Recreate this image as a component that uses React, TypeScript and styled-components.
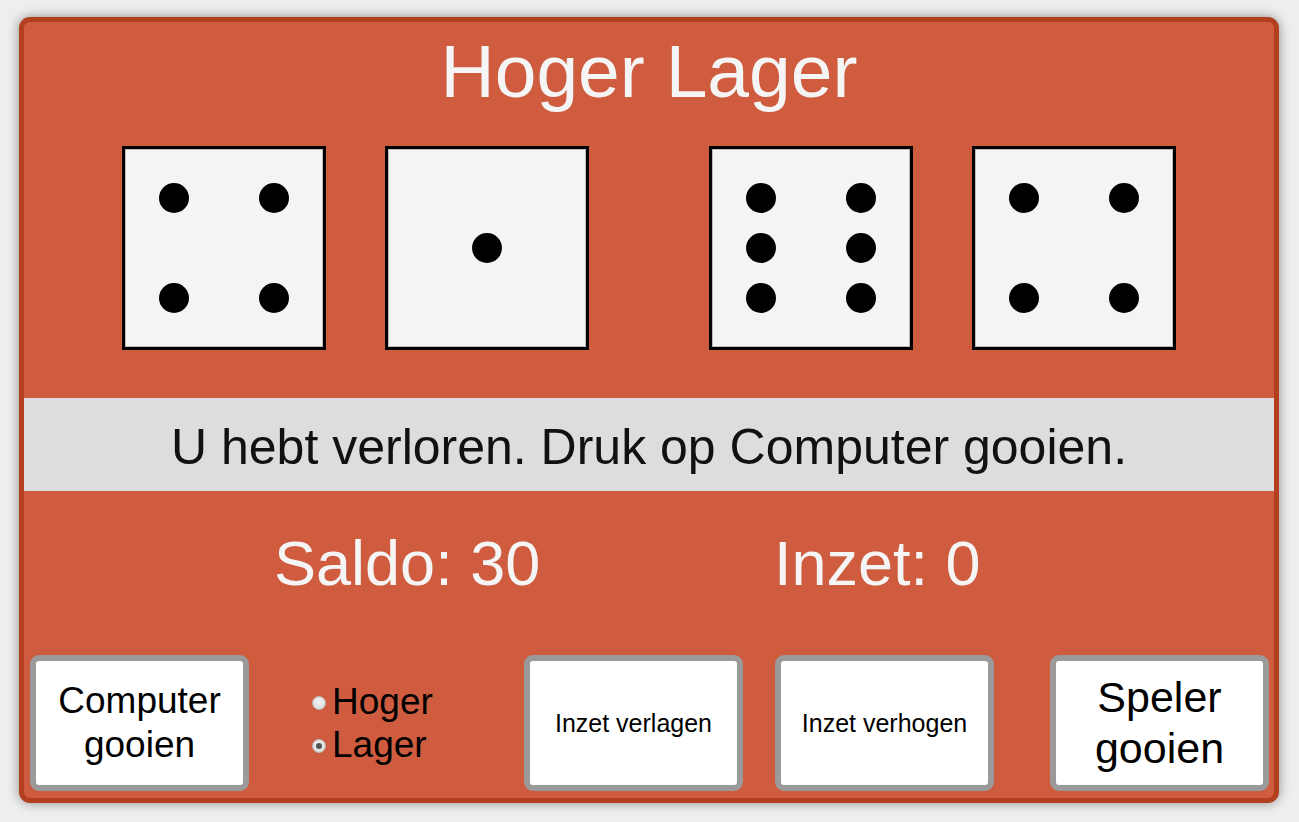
import React from "react";
import styled, { createGlobalStyle } from "styled-components";

const GlobalStyle = createGlobalStyle`
  html, body {
    margin: 0;
    padding: 0;
    background: #eeeeee;
    font-family: "Liberation Sans", Arial, sans-serif;
  }
  * { box-sizing: border-box; }
`;

const Page = styled.div`
  padding: 17px 0 0 19px;
  width: 1299px;
  height: 822px;
`;

const Card = styled.main`
  width: 1260px;
  background: #cf5c3f;
  border: 5px solid #b2401f;
  border-radius: 11px;
  box-shadow: 0 0 12px rgba(0, 0, 0, 0.4);
  padding-bottom: 7px;
  display: flex;
  flex-direction: column;
`;

const Title = styled.h1`
  margin: 7px 0 0;
  font-size: 75px;
  font-weight: normal;
  line-height: 84px;
  text-align: center;
  color: #f5f5f5;
`;

const DiceRow = styled.div`
  display: flex;
  justify-content: center;
  gap: 120px;
  margin-top: 33px;
`;

const DicePair = styled.div`
  display: flex;
  gap: 59px;
`;

const DieFace = styled.div`
  width: 204px;
  height: 204px;
  border: 3px solid #000;
  background: #f4f4f4;
  box-shadow: inset 0 0 0 1px #bdbdbd;
  display: grid;
  grid-template-columns: repeat(3, 50px);
  grid-template-rows: repeat(3, 50px);
  justify-content: center;
  align-content: center;
`;

const PipCell = styled.div<{ $on: boolean }>`
  display: flex;
  align-items: center;
  justify-content: center;
  &::after {
    content: "";
    width: 30px;
    height: 30px;
    border-radius: 50%;
    background: ${(p) => (p.$on ? "#000" : "transparent")};
  }
`;

const Message = styled.div`
  margin-top: 48px;
  height: 93px;
  padding-top: 21px;
  background: #dddddd;
  color: #111;
  font-size: 50px;
  line-height: 56px;
  text-align: center;
`;

const Stats = styled.div`
  display: flex;
  margin-top: 37px;
  padding-left: 250px;
  height: 70px;
`;

const Stat = styled.div`
  width: 500px;
  font-size: 63px;
  line-height: 70px;
  color: #f5f5f5;
`;

const Controls = styled.div`
  display: flex;
  align-items: center;
  margin-top: 57px;
  padding-left: 6px;
`;

const Button = styled.button<{ $size: number; $gap: number }>`
  width: 219px;
  height: 136px;
  margin-left: ${(p) => p.$gap}px;
  padding: 0;
  background: #fff;
  border: 6px solid #9a9a9a;
  border-radius: 9px;
  color: #000;
  font-family: "Liberation Sans", Arial, sans-serif;
  font-size: ${(p) => p.$size}px;
  line-height: ${(p) => Math.round(p.$size * 1.18)}px;
  cursor: pointer;
`;

const RadioGroup = styled.div`
  width: 212px;
  margin-left: 63px;
  display: flex;
  flex-direction: column;
`;

const RadioLabel = styled.label`
  display: flex;
  align-items: center;
  font-size: 37px;
  line-height: 43px;
  color: #000;
`;

const Radio = styled.input`
  appearance: none;
  margin: 0 6px 0 0;
  width: 14px;
  height: 14px;
  border-radius: 50%;
  border: 1px solid #b9b9b9;
  background: radial-gradient(circle at 50% 40%, #f2f2f2, #d6d6d6);
  display: grid;
  place-items: center;
  position: relative;
  top: 1px;
  &:checked::after {
    content: "";
    width: 6px;
    height: 6px;
    border-radius: 50%;
    background: #555;
  }
`;

const PIPS: Record<number, number[]> = {
  1: [4],
  2: [0, 8],
  3: [0, 4, 8],
  4: [0, 2, 6, 8],
  5: [0, 2, 4, 6, 8],
  6: [0, 2, 3, 5, 6, 8],
};

const Die = ({ value }: { value: number }) => (
  <DieFace>
    {Array.from({ length: 9 }, (_, i) => (
      <PipCell key={i} $on={PIPS[value].includes(i)} />
    ))}
  </DieFace>
);

export default function App() {
  const [choice, setChoice] = React.useState("lager");
  return (
    <>
      <GlobalStyle />
      <Page>
        <Card>
          <Title>Hoger Lager</Title>
          <DiceRow>
            <DicePair>
              <Die value={4} />
              <Die value={1} />
            </DicePair>
            <DicePair>
              <Die value={6} />
              <Die value={4} />
            </DicePair>
          </DiceRow>
          <Message>U hebt verloren. Druk op Computer gooien.</Message>
          <Stats>
            <Stat>Saldo: 30</Stat>
            <Stat>Inzet: 0</Stat>
          </Stats>
          <Controls>
            <Button $size={37} $gap={0}>
              Computer
              <br />
              gooien
            </Button>
            <RadioGroup>
              <RadioLabel>
                <Radio
                  type="radio"
                  name="keuze"
                  checked={choice === "hoger"}
                  onChange={() => setChoice("hoger")}
                />
                Hoger
              </RadioLabel>
              <RadioLabel>
                <Radio
                  type="radio"
                  name="keuze"
                  checked={choice === "lager"}
                  onChange={() => setChoice("lager")}
                />
                Lager
              </RadioLabel>
            </RadioGroup>
            <Button $size={25} $gap={0}>Inzet verlagen</Button>
            <Button $size={25} $gap={32}>Inzet verhogen</Button>
            <Button $size={43} $gap={56}>
              Speler
              <br />
              gooien
            </Button>
          </Controls>
        </Card>
      </Page>
    </>
  );
}
